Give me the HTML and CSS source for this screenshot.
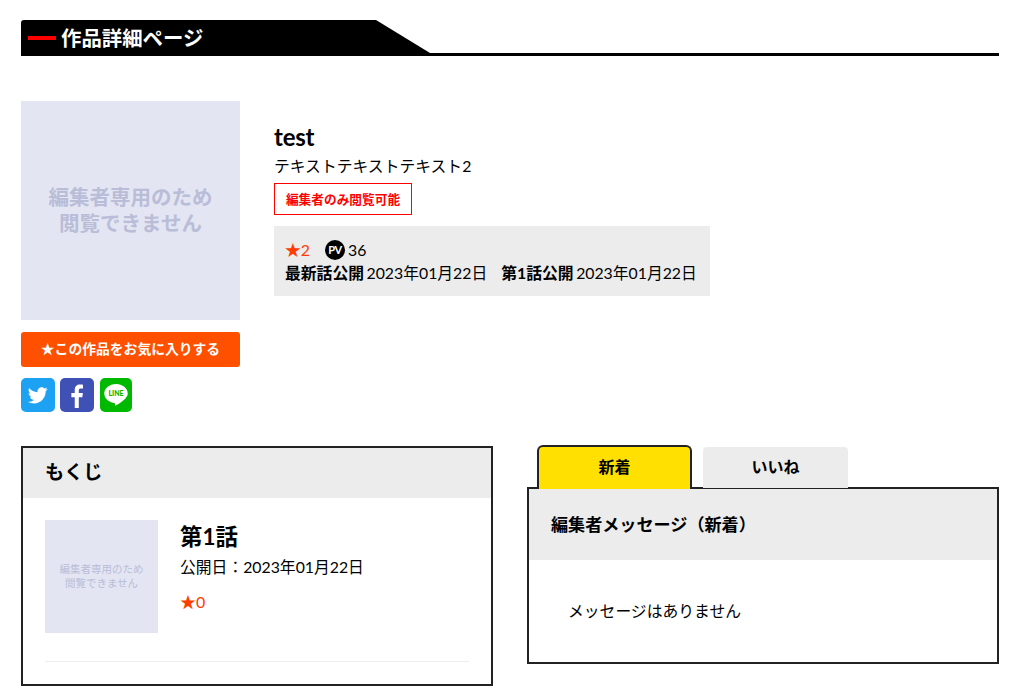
FILE: index.html
```html
<!DOCTYPE html>
<html lang="ja">
<head>
    <title>作品詳細ページ</title>
    <link rel="stylesheet" href="styles.css">
</head>
<body>
    <div class="page-head">
        <h1 class="page-title"><span class="title-dash"></span>作品詳細ページ</h1>
    </div>

    <div class="work">
        <div class="work-side">
            <div class="cover">編集者専用のため<br>閲覧できません</div>
            <a class="fav-btn">★この作品をお気に入りする</a>
            <div class="share">
                <a class="share-btn twitter">
                    <svg viewBox="0 0 24 24" width="20" height="20"><path fill="#fff" d="M23.6 4.9c-.9.4-1.800.7-2.800.8 1-.6 1.800-1.600 2.100-2.700-.9.6-2 1-3.100 1.200C18.900 3.200 17.600 2.600 16.300 2.600c-2.700 0-4.900 2.200-4.900 4.900 0 .4 0 .8.100 1.100C7.400 8.400 3.800 6.400 1.400 3.500.900 4.200.700 5.100.700 6c0 1.700.9 3.200 2.200 4.100-.8 0-1.600-.2-2.200-.6v.1c0 2.400 1.700 4.400 3.900 4.800-.4.100-.8.200-1.300.2-.3 0-.6 0-.9-.1.600 2 2.400 3.400 4.600 3.400-1.700 1.300-3.800 2.100-6.100 2.100-.4 0-.8 0-1.200-.1 2.200 1.400 4.800 2.200 7.500 2.200 9.100 0 14-7.500 14-14v-.6c1-.7 1.800-1.600 2.400-2.500z"/></svg>
                </a>
                <a class="share-btn facebook">
                    <svg viewBox="0 0 24 32" width="18" height="24"><path fill="#fff" d="M9 32V17.500H4.500V12H9V8c0-4.700 2.800-7.200 6.900-7.200 2 0 3.600.2 4.100.2v5h-2.900c-2.300 0-2.700 1.100-2.700 2.700V12h5.400l-.7 5.500h-4.700V32z"/></svg>
                </a>
                <a class="share-btn line">
                    <svg viewBox="0 0 32 32" width="28" height="28"><path fill="#fff" d="M16 3.500C8.600 3.500 2.600 8.400 2.600 14.400c0 5.400 4.700 9.900 11.100 10.800.4.100 1 .3 1.100.6.100.3.100.8 0 1.200 0 .4-.2 1.500 1.200.8 1.500-.6 8-4.700 10.900-8.100 2-2.100 2.500-3.700 2.500-5.300C29.400 8.400 23.400 3.500 16 3.500z"/><text x="16" y="17.500" text-anchor="middle" class="line-text">LINE</text></svg>
                </a>
            </div>
        </div>
        <div class="work-info">
            <h2 class="work-title">test</h2>
            <p class="work-desc">テキストテキストテキスト2</p>
            <div class="badge">編集者のみ閲覧可能</div>
            <div class="stats">
                <div class="stats-row stats-counts">
                    <span class="fav-count">★2</span>
                    <span class="pv-icon">PV</span>
                    <span>36</span>
                </div>
                <div class="stats-row">
                    <b>最新話公開</b> 2023年01月22日<b class="stats-next">第1話公開</b> 2023年01月22日
                </div>
            </div>
        </div>
    </div>

    <div class="columns">
        <div class="toc">
            <h3 class="box-head">もくじ</h3>
            <div class="toc-body">
                <div class="episode">
                    <div class="thumb">編集者専用のため<br>閲覧できません</div>
                    <div class="episode-info">
                        <div class="episode-title">第1話</div>
                        <div class="episode-date">公開日：2023年01月22日</div>
                        <div class="fav-count episode-fav">★0</div>
                    </div>
                </div>
            </div>
        </div>
        <div class="messages">
            <div class="tabs">
                <div class="tab active">新着</div>
                <div class="tab">いいね</div>
            </div>
            <div class="message-box">
                <h3 class="box-head message-head">編集者メッセージ（新着）</h3>
                <p class="message-empty">メッセージはありません</p>
            </div>
        </div>
    </div>
</body>
</html>
```

FILE: styles.css
```css
* {
    box-sizing: border-box;
}
body {
    margin: 0;
    padding: 20px 25px 10px 21px;
    background: #fff;
    color: #000;
    font-family: 'Lato', 'Noto Sans CJK JP', sans-serif;
    font-size: 16px;
}
h1, h2, h3, p {
    margin: 0;
}
.page-head {
    height: 36px;
    border-bottom: 3px solid #000;
}
.page-title {
    display: flex;
    align-items: center;
    width: 409px;
    height: 36px;
    padding-left: 7px;
    background: #000;
    border-top-left-radius: 3px;
    clip-path: polygon(0 0, 355px 0, 409px 33px, 409px 36px, 0 36px);
    color: #fff;
    font-size: 20.4px;
    font-weight: 700;
    line-height: 36px;
}
.title-dash {
    width: 28px;
    height: 4px;
    margin-right: 5px;
    background: #f00;
}
.work {
    display: flex;
    margin-top: 45px;
}
.work-side {
    width: 219px;
    margin-right: 34px;
}
.cover {
    display: flex;
    align-items: center;
    justify-content: center;
    height: 219px;
    padding-bottom: 2px;
    background: #e3e5f2;
    color: #b9bdd8;
    font-size: 20.5px;
    font-weight: 700;
    line-height: 26px;
    text-align: center;
}
.fav-btn {
    display: block;
    height: 35px;
    margin-top: 12px;
    background: #ff5000;
    border-radius: 3px;
    color: #fff;
    font-size: 13.8px;
    font-weight: 700;
    line-height: 33px;
    text-align: center;
}
.share {
    display: flex;
    margin-top: 11px;
}
.share-btn {
    display: flex;
    align-items: center;
    justify-content: center;
    width: 34px;
    height: 34px;
    margin-right: 5px;
    border-radius: 5px;
}
.twitter {
    background: #1da1f2;
}
.facebook {
    background: #3f51b5;
    margin-right: 6px;
}
.facebook svg {
    margin-top: 2px;
}
.line {
    width: 32px;
    background: #00b900;
}
.line-text {
    fill: #00b900;
    font-family: 'Lato', sans-serif;
    font-size: 8px;
    font-weight: 900;
}
.work-info {
    width: 436px;
    padding-top: 21px;
}
.work-title {
    font-size: 24px;
    font-weight: 700;
    letter-spacing: -0.2px;
    line-height: 29px;
}
.work-desc {
    margin-top: 3px;
    font-size: 15.8px;
    line-height: 24px;
}
.badge {
    width: 138px;
    height: 32px;
    margin-top: 5px;
    border: 1px solid #f00;
    color: #f00;
    font-size: 12.7px;
    font-weight: 700;
    line-height: 30px;
    text-align: center;
}
.stats {
    height: 70px;
    margin-top: 11px;
    padding: 12px 11px;
    background: #ececec;
    font-size: 15.8px;
    line-height: 23px;
    word-spacing: -1.5px;
}
.stats-row {
    height: 23px;
    white-space: nowrap;
}
.stats-counts {
    display: flex;
    align-items: center;
}
.fav-count {
    color: #ff3c00;
}
.pv-icon {
    width: 20px;
    height: 20px;
    margin: 0 3px 0 15px;
    background: #000;
    border-radius: 50%;
    color: #fff;
    font-size: 11px;
    font-weight: 700;
    letter-spacing: -0.5px;
    line-height: 20px;
    text-align: center;
}
.stats-next {
    margin-left: 14px;
}
.columns {
    display: flex;
    justify-content: space-between;
    align-items: flex-start;
    margin-top: 34px;
}
.toc {
    width: 472px;
    height: 240px;
    border: 2px solid #222;
}
.box-head {
    height: 50px;
    padding-left: 22px;
    background: #ececec;
    font-size: 19.2px;
    font-weight: 700;
    line-height: 48px;
}
.toc-body {
    padding: 22px 22px 0;
}
.episode {
    display: flex;
    height: 142px;
    border-bottom: 1px solid #eee;
}
.thumb {
    display: flex;
    align-items: center;
    justify-content: center;
    width: 113px;
    height: 113px;
    margin-right: 22px;
    padding-bottom: 2px;
    background: #e3e5f2;
    color: #b9bdd8;
    font-size: 10.5px;
    line-height: 14px;
    text-align: center;
}
.episode-title {
    margin-top: 1px;
    font-size: 22.4px;
    font-weight: 700;
    line-height: 32px;
}
.episode-date {
    margin-top: 1px;
    font-size: 15.8px;
    line-height: 26px;
}
.episode-fav {
    margin-top: 10px;
    line-height: 24px;
}
.messages {
    width: 472px;
    margin-top: -1px;
}
.tabs {
    display: flex;
    align-items: flex-end;
    padding-left: 10px;
    position: relative;
    z-index: 1;
    margin-bottom: -2px;
}
.tab {
    width: 145px;
    height: 42px;
    margin-left: 11px;
    background: #ececec;
    border-radius: 4px 4px 0 0;
    border-bottom: 1px solid #222;
    font-size: 16px;
    font-weight: 700;
    line-height: 40px;
    text-align: center;
}
.tab.active {
    width: 155px;
    height: 44px;
    margin-left: 0;
    background: #ffe000;
    border: 2px solid #222;
    border-bottom: 0;
    border-radius: 6px 6px 0 0;
}
.message-box {
    height: 177px;
    border: 2px solid #222;
}
.message-head {
    height: 71px;
    font-size: 17.1px;
    line-height: 71px;
}
.message-empty {
    padding: 39px 0 0 39px;
    font-size: 15.8px;
    line-height: 24px;
}
```
